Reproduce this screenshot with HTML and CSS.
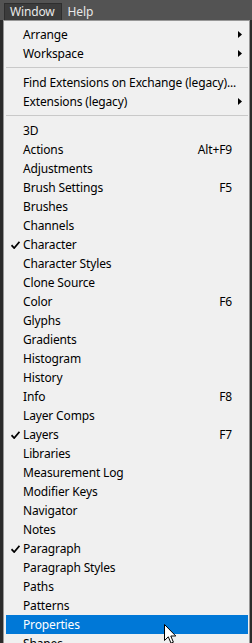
FILE: index.html
```html
<!DOCTYPE html>
<html lang="en">
<head>
    <meta charset="UTF-8">
    <title>Window menu</title>
    <link rel="stylesheet" href="styles.css">
</head>
<body>
    <div class="menubar">
        <div class="menubar-item active">Window</div>
        <div class="menubar-item">Help</div>
    </div>

    <div class="menu">
        <div class="menu-item"><span class="check"></span><span class="label">Arrange</span><span class="key"></span><span class="sub"><svg width="4" height="7" viewBox="0 0 4 7"><path d="M0 0 L4 3.5 L0 7 Z" fill="#000"/></svg></span></div>
        <div class="menu-item"><span class="check"></span><span class="label">Workspace</span><span class="key"></span><span class="sub"><svg width="4" height="7" viewBox="0 0 4 7"><path d="M0 0 L4 3.5 L0 7 Z" fill="#000"/></svg></span></div>
        <div class="separator"></div>
        <div class="menu-item"><span class="check"></span><span class="label">Find Extensions on Exchange (legacy)...</span><span class="key"></span><span class="sub"></span></div>
        <div class="menu-item"><span class="check"></span><span class="label">Extensions (legacy)</span><span class="key"></span><span class="sub"><svg width="4" height="7" viewBox="0 0 4 7"><path d="M0 0 L4 3.5 L0 7 Z" fill="#000"/></svg></span></div>
        <div class="separator"></div>
        <div class="menu-item"><span class="check"></span><span class="label">3D</span><span class="key"></span><span class="sub"></span></div>
        <div class="menu-item"><span class="check"></span><span class="label">Actions</span><span class="key">Alt+F9</span><span class="sub"></span></div>
        <div class="menu-item"><span class="check"></span><span class="label">Adjustments</span><span class="key"></span><span class="sub"></span></div>
        <div class="menu-item"><span class="check"></span><span class="label">Brush Settings</span><span class="key">F5</span><span class="sub"></span></div>
        <div class="menu-item"><span class="check"></span><span class="label">Brushes</span><span class="key"></span><span class="sub"></span></div>
        <div class="menu-item"><span class="check"></span><span class="label">Channels</span><span class="key"></span><span class="sub"></span></div>
        <div class="menu-item"><span class="check"><svg width="9" height="8" viewBox="0 0 9 8"><path d="M0.5 4.2 L3.2 7 L8.5 0.8" fill="none" stroke="#000" stroke-width="1.8"/></svg></span><span class="label">Character</span><span class="key"></span><span class="sub"></span></div>
        <div class="menu-item"><span class="check"></span><span class="label">Character Styles</span><span class="key"></span><span class="sub"></span></div>
        <div class="menu-item"><span class="check"></span><span class="label">Clone Source</span><span class="key"></span><span class="sub"></span></div>
        <div class="menu-item"><span class="check"></span><span class="label">Color</span><span class="key">F6</span><span class="sub"></span></div>
        <div class="menu-item"><span class="check"></span><span class="label">Glyphs</span><span class="key"></span><span class="sub"></span></div>
        <div class="menu-item"><span class="check"></span><span class="label">Gradients</span><span class="key"></span><span class="sub"></span></div>
        <div class="menu-item"><span class="check"></span><span class="label">Histogram</span><span class="key"></span><span class="sub"></span></div>
        <div class="menu-item"><span class="check"></span><span class="label">History</span><span class="key"></span><span class="sub"></span></div>
        <div class="menu-item"><span class="check"></span><span class="label">Info</span><span class="key">F8</span><span class="sub"></span></div>
        <div class="menu-item"><span class="check"></span><span class="label">Layer Comps</span><span class="key"></span><span class="sub"></span></div>
        <div class="menu-item"><span class="check"><svg width="9" height="8" viewBox="0 0 9 8"><path d="M0.5 4.2 L3.2 7 L8.5 0.8" fill="none" stroke="#000" stroke-width="1.8"/></svg></span><span class="label">Layers</span><span class="key">F7</span><span class="sub"></span></div>
        <div class="menu-item"><span class="check"></span><span class="label">Libraries</span><span class="key"></span><span class="sub"></span></div>
        <div class="menu-item"><span class="check"></span><span class="label">Measurement Log</span><span class="key"></span><span class="sub"></span></div>
        <div class="menu-item"><span class="check"></span><span class="label">Modifier Keys</span><span class="key"></span><span class="sub"></span></div>
        <div class="menu-item"><span class="check"></span><span class="label">Navigator</span><span class="key"></span><span class="sub"></span></div>
        <div class="menu-item"><span class="check"></span><span class="label">Notes</span><span class="key"></span><span class="sub"></span></div>
        <div class="menu-item"><span class="check"><svg width="9" height="8" viewBox="0 0 9 8"><path d="M0.5 4.2 L3.2 7 L8.5 0.8" fill="none" stroke="#000" stroke-width="1.8"/></svg></span><span class="label">Paragraph</span><span class="key"></span><span class="sub"></span></div>
        <div class="menu-item"><span class="check"></span><span class="label">Paragraph Styles</span><span class="key"></span><span class="sub"></span></div>
        <div class="menu-item"><span class="check"></span><span class="label">Paths</span><span class="key"></span><span class="sub"></span></div>
        <div class="menu-item"><span class="check"></span><span class="label">Patterns</span><span class="key"></span><span class="sub"></span></div>
        <div class="menu-item selected"><span class="check"></span><span class="label">Properties</span><span class="key"></span><span class="sub"></span></div>
        <div class="menu-item"><span class="check"></span><span class="label">Shapes</span><span class="key"></span><span class="sub"></span></div>
    </div>

    <!-- mouse pointer over the highlighted row -->
    <svg class="cursor" width="13" height="21" viewBox="0 0 13 21">
        <path d="M0.5 0.5 L0.5 16.5 L4.3 12.8 L7 19.2 L9.4 18.2 L6.8 12 L11.8 12 Z" fill="#fff" stroke="#000" stroke-width="1"/>
    </svg>
</body>
</html>
```

FILE: styles.css
```css
* {
    margin: 0;
    padding: 0;
    box-sizing: border-box;
}
body {
    width: 252px;
    height: 643px;
    overflow: hidden;
    background: #2b2b2b;
    font-family: "Noto Sans", "Open Sans", sans-serif;
    font-size: 12px;
    letter-spacing: -0.15px;
    position: relative;
}
.menubar {
    height: 20px;
    background: #535353;
    display: flex;
    align-items: flex-end;
    padding-left: 4px;
}
.menubar-item {
    height: 17px;
    line-height: 16px;
    padding: 0 6px 0 5px;
    color: #e8e8e8;
    border: 1px solid transparent;
    border-bottom: none;
}
.menubar-item.active {
    background: #3c3c3c;
    border-color: #2e2e2e;
}
.menu {
    margin-left: 3px;
    width: 247px;
    background: #f0f0f0;
    border: 1px solid #979797;
    padding: 4px 1px 4px 2px;
}
.menu-item {
    height: 19px;
    display: grid;
    grid-template-columns: 17px 1fr auto 16px;
    align-items: center;
    color: #000;
    white-space: nowrap;
}
.menu-item.selected {
    background: #0078d7;
    color: #fff;
}
.check {
    display: flex;
    justify-content: center;
    padding-left: 2px;
}
.key {
    text-align: right;
}
.sub {
    display: flex;
    align-items: center;
    padding-left: 6px;
}
.separator {
    height: 10px;
    padding-top: 4px;
}
.separator::before {
    content: "";
    display: block;
    height: 1px;
    background: #c9c9c9;
}
.cursor {
    position: absolute;
    left: 164px;
    top: 624px;
}
```
